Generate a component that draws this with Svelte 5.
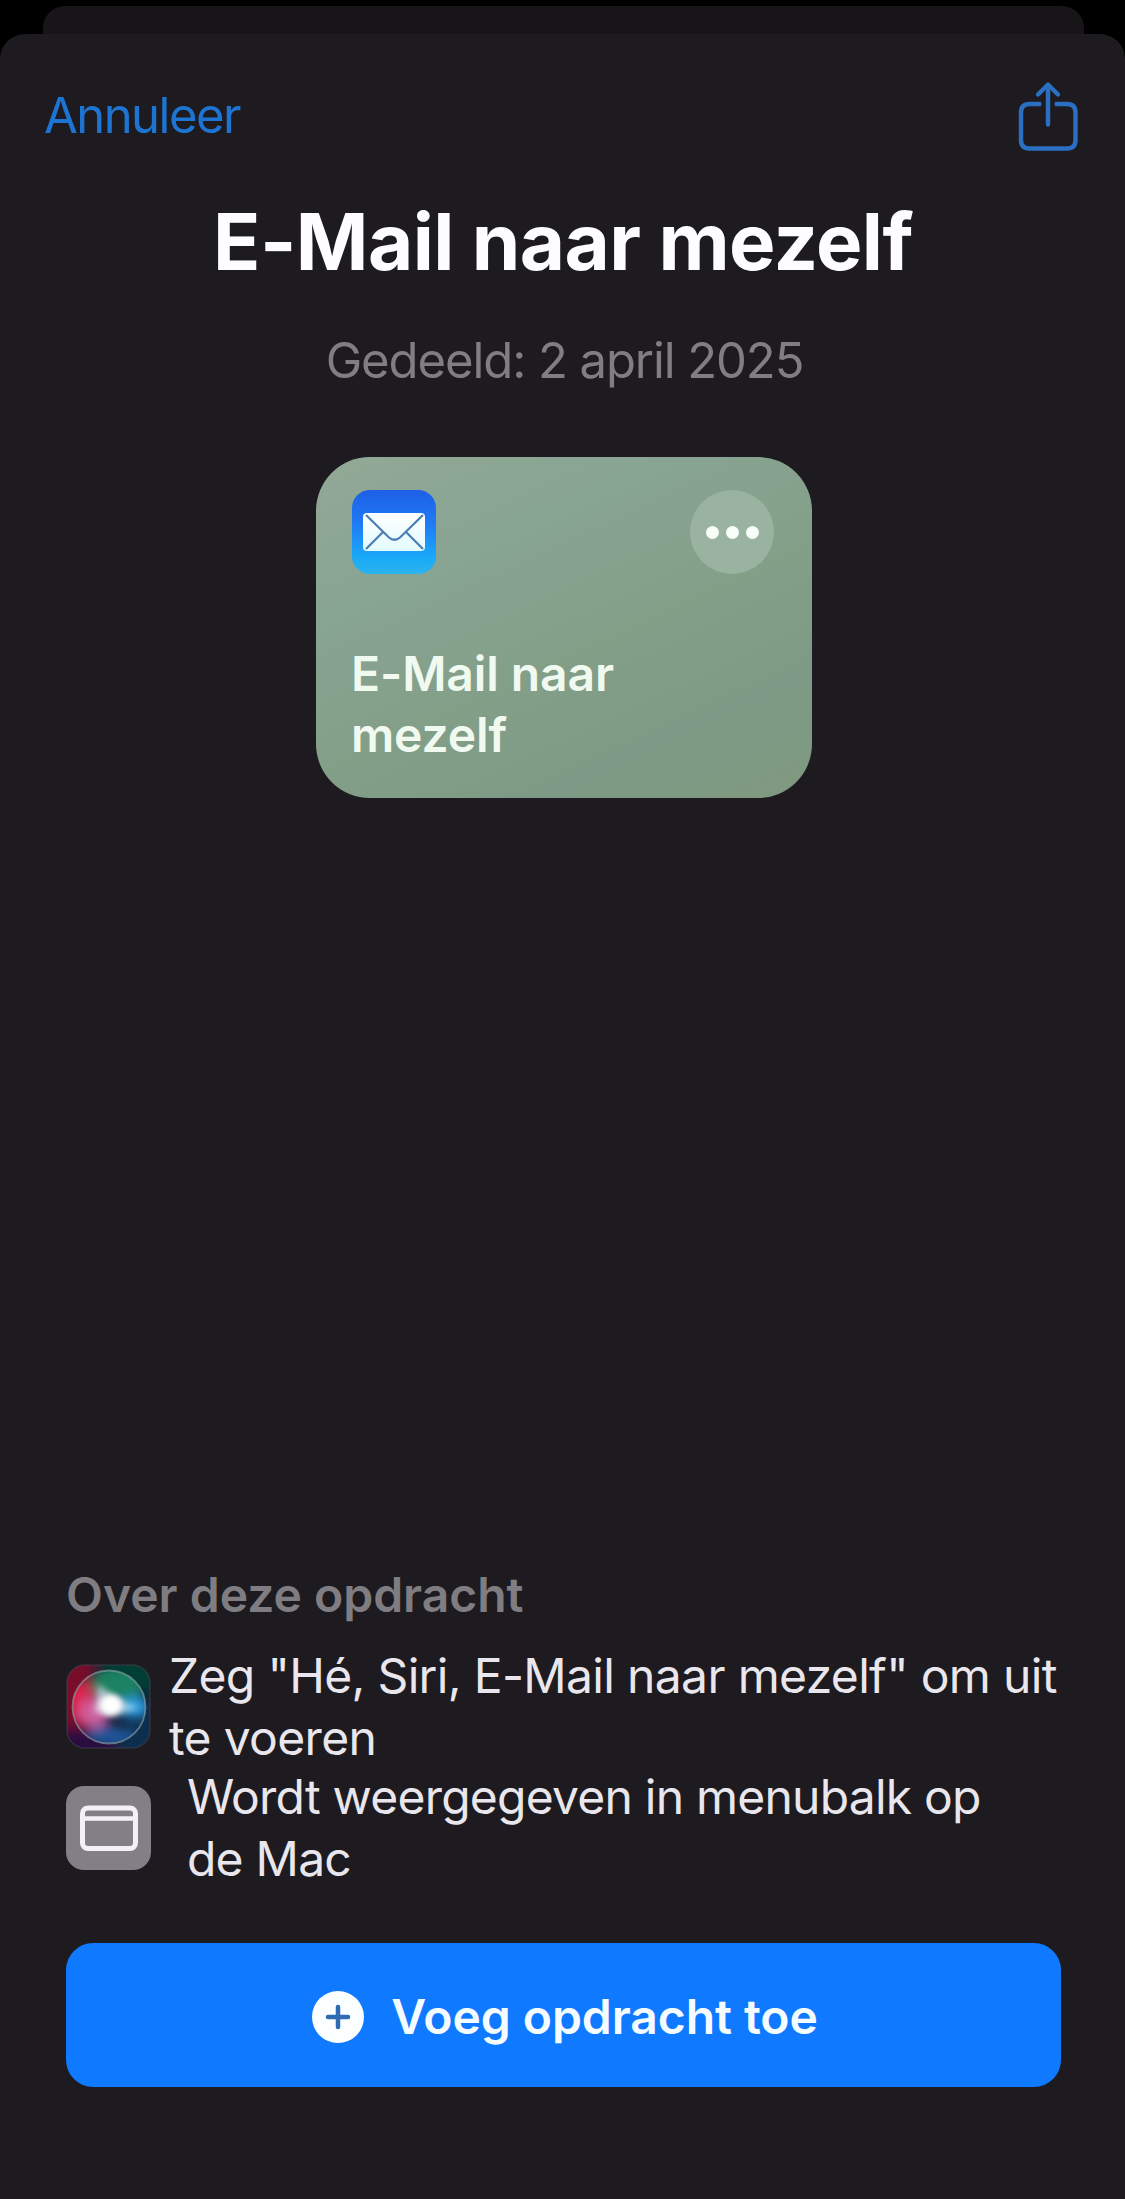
<script>
  const title = 'E-Mail naar mezelf';
</script>

<div class="screen">
  <div class="sheet-behind"></div>
  <main class="sheet">
    <nav>
      <button class="cancel">Annuleer</button>
      <button class="share" aria-label="Deel">
        <svg width="68" height="76" viewBox="0 0 68 76" fill="none" stroke="#2a6fc2" stroke-width="4.4" stroke-linecap="round" stroke-linejoin="round">
          <path d="M25.500 25H15.500Q7 25 7 33.500V61Q7 69.500 15.500 69.500H53Q61.500 69.500 61.500 61V33.500Q61.500 25 53 25H42.500" />
          <path d="M34 45.500V6.500M24 15.500L34 5.500L44 15.500" />
        </svg>
      </button>
    </nav>

    <h1>{title}</h1>
    <p class="shared">Gedeeld: 2 april 2025</p>

    <article class="card">
      <div class="card-top">
        <svg width="84" height="84" viewBox="0 0 84 84">
          <defs>
            <linearGradient id="mail" x1="0" y1="0" x2="0" y2="1">
              <stop offset="0" stop-color="#1d5fe6" />
              <stop offset=".4" stop-color="#1f7bf5" />
              <stop offset=".8" stop-color="#19a9f8" />
              <stop offset="1" stop-color="#2bb4ee" />
            </linearGradient>
            <linearGradient id="paper" x1="0" y1="0" x2="0" y2="1">
              <stop offset="0" stop-color="#ffffff" />
              <stop offset="1" stop-color="#e2fbff" />
            </linearGradient>
          </defs>
          <rect width="84" height="84" rx="18" fill="url(#mail)" />
          <rect x="11" y="23" width="62" height="38" rx="4" fill="url(#paper)" />
          <path d="M14 25L37 47.500Q42.500 52 48 47.500L71 25M14 59L31 42M71 59L54 42" fill="none" stroke="#4a7db4" stroke-width="2.200" />
        </svg>
        <div class="more"><i></i><i></i><i></i></div>
      </div>
      <h2>{title}</h2>
    </article>

    <section class="about">
      <h3>Over deze opdracht</h3>
      <div class="row">
        <svg width="85" height="85" viewBox="0 0 85 85">
          <defs>
            <clipPath id="tile"><rect x="1" y="1" width="83" height="83" rx="18" /></clipPath>
            <clipPath id="orb"><circle cx="43" cy="43" r="36.500" /></clipPath>
            <filter id="soft" x="-50%" y="-50%" width="200%" height="200%"><feGaussianBlur stdDeviation="6" /></filter>
            <filter id="glow" x="-50%" y="-50%" width="200%" height="200%"><feGaussianBlur stdDeviation="3" /></filter>
          </defs>
          <g clip-path="url(#tile)">
            <rect width="85" height="85" fill="#171c38" />
            <g filter="url(#soft)">
              <rect x="-10" y="-10" width="38" height="75" fill="#780a2c" />
              <rect x="36" y="-10" width="60" height="38" fill="#063d34" />
              <rect x="52" y="34" width="46" height="60" fill="#0b2d50" />
              <rect x="-10" y="64" width="60" height="32" fill="#2a1140" />
            </g>
            <g clip-path="url(#orb)">
              <g filter="url(#soft)">
                <ellipse cx="53" cy="19" rx="28" ry="17" fill="#1f8262" />
                <ellipse cx="14" cy="38" rx="14" ry="22" fill="#dc2450" />
                <ellipse cx="28" cy="49" rx="15" ry="15" fill="#d0609f" />
                <ellipse cx="45" cy="72" rx="26" ry="11" fill="#1f5499" />
                <ellipse cx="69" cy="43" rx="15" ry="10" fill="#2ea2e6" />
              </g>
              <path d="M45 54L68 60L58 66L44 60Z" fill="#1b2b3c" opacity=".6" filter="url(#glow)" />
              <path d="M32 20L50 33L72 44L56 50L42 52L28 48Z" fill="#dff4ff" opacity=".6" filter="url(#glow)" />
              <ellipse cx="45" cy="41" rx="11" ry="10" fill="#fff" filter="url(#glow)" />
              <ellipse cx="45" cy="41" rx="8" ry="7" fill="#fff" filter="url(#glow)" />
            </g>
            <circle cx="43" cy="43" r="36.500" fill="none" stroke="#8fa9a8" stroke-opacity=".6" stroke-width="1.800" />
          </g>
          <rect x="1" y="1" width="83" height="83" rx="18" fill="none" stroke="#53505a" stroke-opacity=".4" stroke-width="1.500" />
        </svg>
        <p>Zeg "Hé, Siri, {title}" om uit<br />te voeren</p>
      </div>
      <div class="row mac">
        <svg width="85" height="84" viewBox="0 0 85 84">
          <rect width="85" height="84" rx="18" fill="#828086" />
          <rect x="16.500" y="22" width="53" height="40.500" rx="5.500" fill="none" stroke="#f3f1f7" stroke-width="5" />
          <path d="M16.500 32.500H69.500" stroke="#f3f1f7" stroke-width="4.500" />
        </svg>
        <p>Wordt weergegeven in menubalk op<br />de Mac</p>
      </div>
    </section>

    <button class="add">
      <svg width="52" height="52" viewBox="0 0 52 52">
        <circle cx="26" cy="26" r="26" fill="#fbffff" />
        <path d="M26 16V36M16 26H36" stroke="#2f6cb4" stroke-width="4.500" stroke-linecap="round" />
      </svg>
      <span>Voeg opdracht toe</span>
    </button>
  </main>
</div>

<style>
  :global(body) {
    margin: 0;
    background: #000;
  }
  .screen {
    width: 1125px;
    height: 2199px;
    box-sizing: border-box;
    padding-top: 6px;
    overflow: hidden;
    background: #000;
    font-family: Inter, "Liberation Sans", sans-serif;
    color: #e9e7ed;
  }
  h1, h2, h3, p {
    margin: 0;
  }
  svg {
    display: block;
    flex: none;
  }
  button {
    border: 0;
    padding: 0;
    background: none;
    font: inherit;
  }
  .sheet-behind {
    height: 28px;
    margin: 0 41px 0 43px;
    border-radius: 22px 22px 0 0;
    background: #171518;
  }
  .sheet {
    display: flex;
    flex-direction: column;
    height: 2165px;
    box-sizing: border-box;
    padding: 45px 0 112px;
    border-radius: 25px 25px 0 0;
    background: #1d1b1f;
  }
  nav {
    display: flex;
    justify-content: space-between;
    align-items: flex-start;
    height: 74px;
    padding: 0 43px 0 44px;
  }
  .cancel {
    margin-top: 6px;
    font-size: 49px;
    line-height: 62px;
    letter-spacing: -1.53px;
    color: #1d74d2;
  }
  h1 {
    margin-top: 42px;
    padding-left: 1px;
    font-size: 78px;
    font-weight: 700;
    line-height: 94px;
    letter-spacing: -0.55px;
    text-align: center;
    color: #fdfcff;
  }
  .shared {
    margin-top: 41px;
    padding-left: 4px;
    font-size: 49px;
    line-height: 62px;
    letter-spacing: -1.08px;
    text-align: center;
    color: #807e83;
  }
  .card {
    width: 496px;
    height: 341px;
    box-sizing: border-box;
    margin: 65px 0 0 316px;
    padding: 33px 38px 0 36px;
    border-radius: 54px;
    background: linear-gradient(155deg, #92a995 0%, #88a493 28%, #849f88 55%, #7e9a86 78%, #80997f 100%);
  }
  .card-top {
    display: flex;
    justify-content: space-between;
  }
  .more {
    display: flex;
    justify-content: center;
    align-items: center;
    gap: 7px;
    width: 84px;
    height: 84px;
    border-radius: 50%;
    background: #9ab3a1;
  }
  .more i {
    width: 13px;
    height: 13px;
    border-radius: 50%;
    background: #f7fff8;
  }
  h2 {
    width: 330px;
    margin: 68.5px 0 0 -1px;
    font-size: 48px;
    font-weight: 600;
    line-height: 61.5px;
    letter-spacing: -0.1px;
    color: #f1faf0;
  }
  .about {
    margin-top: auto;
    padding-left: 66px;
  }
  h3 {
    margin-bottom: 19.5px;
    font-size: 48px;
    font-weight: 600;
    line-height: 60px;
    letter-spacing: 0;
    color: #7f7d82;
  }
  .row {
    display: flex;
    align-items: center;
    gap: 18px;
    font-size: 48px;
    line-height: 62px;
    letter-spacing: -0.66px;
    white-space: nowrap;
  }
  .mac {
    gap: 36px;
    margin-top: -3px;
    letter-spacing: -0.77px;
  }
  .add {
    display: flex;
    flex: none;
    justify-content: center;
    align-items: center;
    gap: 27px;
    height: 144px;
    box-sizing: border-box;
    margin: 53.5px 64px 0 66px;
    padding: 3px 0 0 3px;
    border-radius: 27px;
    background: #0f79ff;
    font-size: 48px;
    font-weight: 600;
    line-height: 60px;
    letter-spacing: -0.06px;
    color: #f4fcff;
  }
</style>
